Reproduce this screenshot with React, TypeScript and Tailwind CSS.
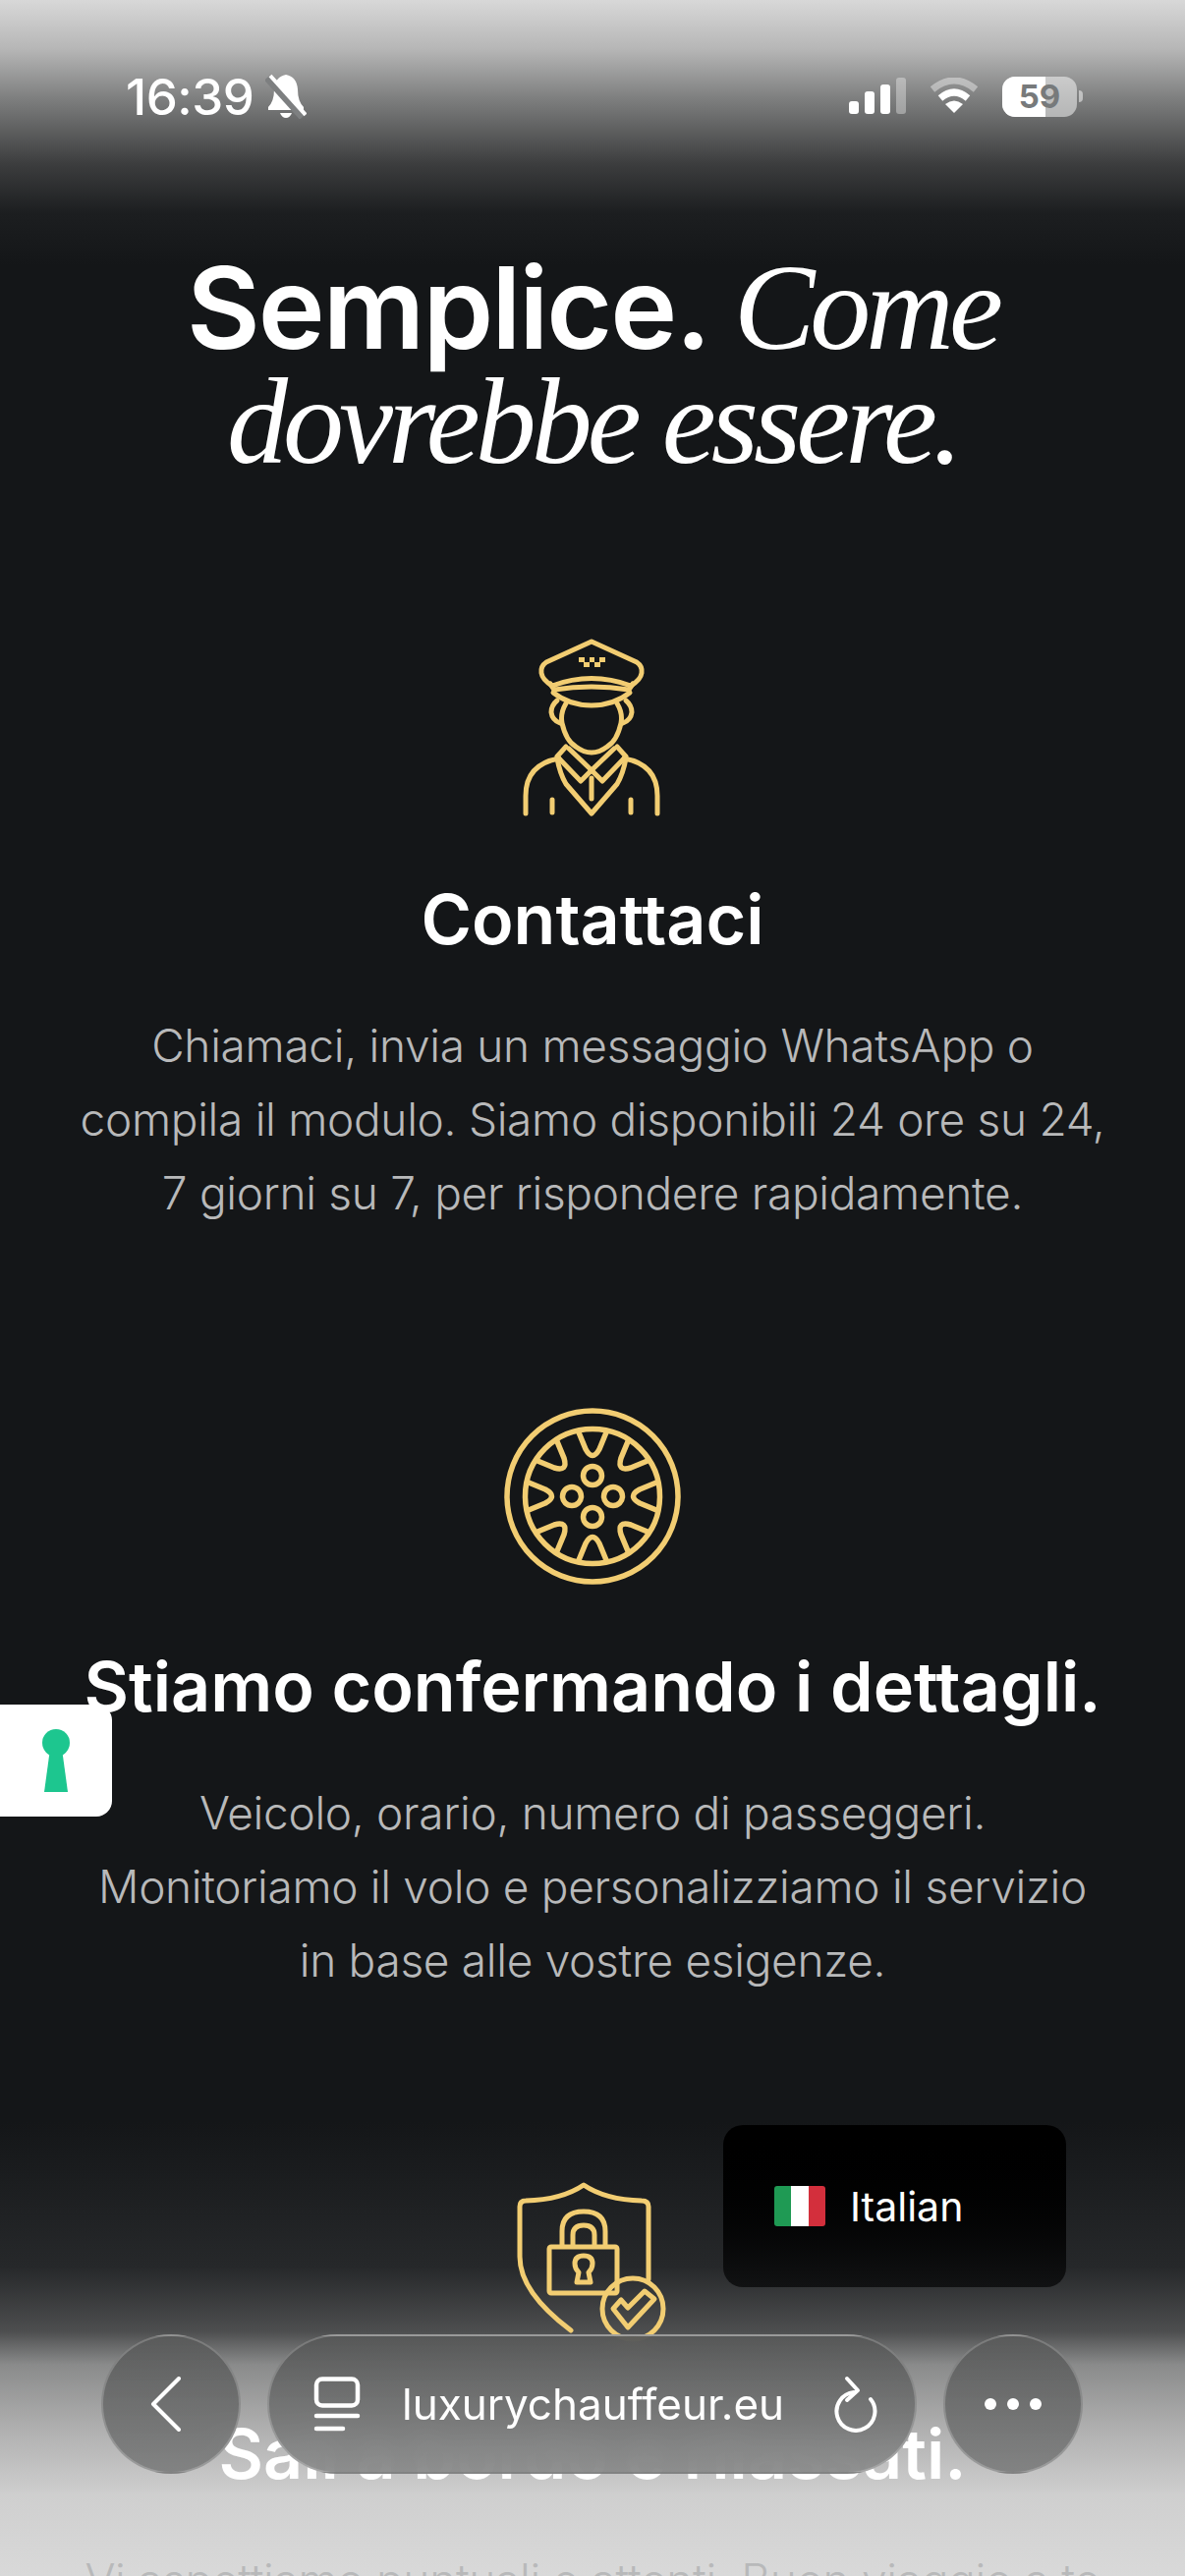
const GOLD = '#f2cd72'

function DriverIcon() {
  return (
    <svg width="142" height="182" viewBox="0 0 142 182" fill="none" stroke={GOLD} strokeWidth="5" strokeLinecap="round" strokeLinejoin="round">
      {/* cap */}
      <path d="M70 3 L116 24 Q122 28 121 35 Q120 42 110 48 Q70 33 30 48 Q20 42 19 35 Q18 28 24 24 Z" />
      <path d="M28 46 L32 52 Q70 46 108 52 L112 46" />
      <path d="M31 55 Q48 68 70 68 Q92 68 109 55" />
      {/* face */}
      <path d="M44 66 Q38 76 40 86 Q44 104 54 110 Q62 116 70 116 Q78 116 86 110 Q96 104 100 86 Q102 76 96 66" />
      <path d="M35 63 Q29 68 29 75 Q30 83 38 86 M105 63 Q111 68 111 75 Q110 83 102 86" />
      {/* collar and vest */}
      <path d="M44 110 L35 120 L59 145 L70 134 L81 145 L105 120 L96 110" />
      <path d="M47 112 L70 134 L93 112" />
      <path d="M35 122 Q38 138 44 148 L70 178 L96 148 Q102 138 105 122" />
      <path d="M70 142 L70 163" />
      <path d="M37 122 Q3 128 3 160 L3 178 M103 122 Q137 128 137 160 L137 178" />
      <path d="M30 164 L30 177 M110 164 L110 177" />
      <g fill={GOLD} stroke="none">
        <rect x="57" y="19" width="6" height="5" /><rect x="62" y="24" width="6" height="5" />
        <rect x="68" y="19" width="5" height="5" /><rect x="73" y="24" width="6" height="5" />
        <rect x="78" y="19" width="6" height="5" />
      </g>
    </svg>
  )
}

function WheelIcon() {
  const spokes = [0, 45, 90, 135, 180, 225, 270, 315]
  return (
    <svg width="180" height="180" viewBox="0 0 180 180" fill="none" stroke={GOLD} strokeWidth="5.5" strokeLinecap="round" strokeLinejoin="round">
      <circle cx="90" cy="90" r="87" />
      <circle cx="90" cy="90" r="68.5" />
      {spokes.map((a) => (
        <path key={a} transform={`rotate(${a} 90 90)`} d="M76 25 L83 42 Q90 55 97 42 L104 25" />
      ))}
      <circle cx="90" cy="69" r="9.5" />
      <circle cx="90" cy="111" r="9.5" />
      <circle cx="69" cy="90" r="9.5" />
      <circle cx="111" cy="90" r="9.5" />
    </svg>
  )
}

function ShieldIcon() {
  return (
    <svg width="154" height="173" viewBox="0 0 154 173" fill="none" stroke={GOLD} strokeWidth="5" strokeLinecap="round" strokeLinejoin="round">
      <path d="M55 151 Q3 112 3 76 L3 25 Q3 19 9 19 Q46 18 68 3 Q90 18 127 19 Q134 19 134 25 L134 99" />
      <rect x="33" y="66" width="69" height="47" rx="2" />
      <path d="M46 65 L46 50 Q46 30 68 30 Q90 30 90 50 L90 65" />
      <path d="M57 65 L57 54 Q57 44 68 44 Q79 44 79 54 L79 65" />
      <path d="M63 92 Q59 88 59 83 Q59 75 68 75 Q77 75 77 83 Q77 88 73 92 L75 102 L61 102 Z" />
      <circle cx="118" cy="129" r="31" />
      <path d="M98 129 L113 148 L140 119 L130 111 L113 128 L106 120 Z" />
    </svg>
  )
}

const steps = [
  {
    icon: <DriverIcon />,
    title: 'Contattaci',
    text: ['Chiamaci, invia un messaggio WhatsApp o', 'compila il modulo. Siamo disponibili 24 ore su 24,', '7 giorni su 7, per rispondere rapidamente.'],
  },
  {
    icon: <WheelIcon />,
    title: 'Stiamo confermando i dettagli.',
    text: ['Veicolo, orario, numero di passeggeri.', 'Monitoriamo il volo e personalizziamo il servizio', 'in base alle vostre esigenze.'],
  },
  {
    icon: <ShieldIcon />,
    title: 'Sali a bordo e rilassati.',
    text: ['Vi aspettiamo puntuali e attenti. Buon viaggio a te'],
  },
]

function StatusBar() {
  return (
    <div className="absolute top-[72px] left-0 w-full h-[52px] pl-[128px] pr-[104px] flex items-center justify-between text-white">
      <div className="flex items-center gap-[12px]">
        <span className="text-[51px] leading-none font-medium tracking-[-0.5px]">16:39</span>
        <svg width="42" height="46" viewBox="0 0 42 46" fill="white">
          <path d="M21 1 Q10 3 9 16 Q9 28 3 34 L3 37 L39 37 L39 34 Q33 28 33 16 Q32 3 21 1 Z" />
          <path d="M15 40 L27 40 Q25 45 21 45 Q17 45 15 40 Z" />
          <path d="M2 4 L38 44" stroke="#7d7f80" strokeWidth="8" />
          <path d="M5 2 L41 42" stroke="white" strokeWidth="4" />
        </svg>
      </div>
      <div className="flex items-center gap-[24px]">
        <svg width="58" height="38" viewBox="0 0 58 38" fill="white">
          <rect x="0" y="24" width="10" height="13" rx="3" />
          <rect x="16" y="14" width="10" height="23" rx="3" />
          <rect x="32" y="7" width="10" height="30" rx="3" />
          <rect x="48" y="0" width="10" height="37" rx="3" opacity="0.35" />
        </svg>
        <svg width="50" height="38" viewBox="0 0 50 38" fill="none" stroke="white" strokeWidth="7">
          <path d="M3 12 Q25 -6 47 12" opacity="0.4" />
          <path d="M11 21 Q25 9 39 21" />
          <path d="M25 36 L16 27 Q25 20 34 27 Z" fill="white" stroke="none" />
        </svg>
        <div className="flex items-center gap-[2px]">
          <div className="relative w-[76px] h-[41px] rounded-[13px] overflow-hidden bg-white/50 flex items-center justify-center">
            <div className="absolute left-0 top-0 h-full w-[44px] bg-white" />
            <span className="relative text-[33px] leading-none font-bold text-[#777a7b]">59</span>
          </div>
          <div className="w-[4px] h-[12px] rounded-r-full bg-white/50" />
        </div>
      </div>
    </div>
  )
}

function BottomBar() {
  return (
    <div className="absolute left-[103px] top-[2376px] flex items-center gap-[27px]">
      <div className="w-[142px] h-[142px] rounded-full bg-gradient-to-b from-[#595a5a]/90 to-[#7b7c7c]/90 border-2 border-white/20 flex items-center justify-center text-white backdrop-blur-md">
        <svg width="32" height="56" viewBox="0 0 32 56" fill="none" stroke="white" strokeWidth="4" strokeLinecap="round" strokeLinejoin="round" className="-ml-[10px]">
          <path d="M29 2 L3 28 L29 54" />
        </svg>
      </div>
      <div className="w-[661px] h-[142px] rounded-full bg-gradient-to-b from-[#565757]/90 to-[#868787]/90 border-2 border-white/20 flex items-center pl-[45px] pr-[38px] text-white backdrop-blur-md">
        <svg width="48" height="56" viewBox="0 0 48 56" fill="none" stroke="white" strokeWidth="4.5" strokeLinecap="round" className="shrink-0">
          <rect x="3" y="2.5" width="42" height="27" rx="6" />
          <path d="M3 40 L45 40" />
          <path d="M3 53 L30 53" />
        </svg>
        <span className="ml-[42px] text-[44px] leading-none flex-1">luxurychauffeur.eu</span>
        <svg width="46" height="58" viewBox="0 0 46 58" fill="none" stroke="white" strokeWidth="4" strokeLinecap="round" strokeLinejoin="round">
          <path d="M39 24 A19.5 19.5 0 1 1 22 17" />
          <path d="M15 3 L26 15 L15 25" />
        </svg>
      </div>
      <div className="w-[142px] h-[142px] rounded-full bg-gradient-to-b from-[#595a5a]/90 to-[#7b7c7c]/90 border-2 border-white/20 flex items-center justify-center gap-[11px] backdrop-blur-md">
        <span className="w-[12px] h-[12px] rounded-full bg-white" />
        <span className="w-[12px] h-[12px] rounded-full bg-white" />
        <span className="w-[12px] h-[12px] rounded-full bg-white" />
      </div>
    </div>
  )
}

export default function App() {
  return (
    <div className="relative w-[1206px] h-[2622px] overflow-hidden bg-[#141618] text-white font-['Inter',sans-serif]">
      {/* browser fades sit behind the page text */}
      <div className="absolute top-0 left-0 w-full h-[270px] bg-[linear-gradient(to_bottom,#d8d8d8_0px,#b6b6b6_50px,#7e7f7f_100px,#3c3d3e_167px,#1c1e20_217px,#141618_270px)]" />
      <div className="absolute top-[2160px] left-0 w-full h-[462px] bg-[linear-gradient(to_bottom,#141618_0px,#26282a_147px,#4d4e4f_213px,#8a8b8b_247px,#b0b0b0_313px,#cfcfcf_380px,#d9d9d9_462px)]" />

      <main className="relative flex flex-col items-center pt-[256px]">
        <h1 className="text-center text-[115px] leading-[116px] tracking-[-2px]">
          <span className="font-semibold">Semplice. </span>
          <span className="font-['Liberation_Serif',serif] italic text-[124px] tracking-[-5px]">Come</span>
          <br />
          <span className="font-['Liberation_Serif',serif] italic text-[124px] tracking-[-5px]">dovrebbe essere.</span>
        </h1>
        <div className="mt-[162px] flex flex-col items-center gap-[179px]">
          {steps.map((step) => (
            <section key={step.title} className="flex flex-col items-center text-center">
              <div className="h-[182px] flex items-end">{step.icon}</div>
              <h2 className="mt-[64px] text-[70px] leading-[80px] font-semibold">{step.title}</h2>
              <p className="mt-[51px] text-[46px] leading-[75px] font-light text-[#b8b9ba] tracking-[-0.3px]">
                {step.text.map((line) => (
                  <span key={line} className="block whitespace-nowrap">{line}</span>
                ))}
              </p>
            </section>
          ))}
        </div>
      </main>

      <StatusBar />

      {/* language switcher */}
      <div className="absolute left-[736px] top-[2163px] w-[349px] h-[165px] rounded-[20px] bg-gradient-to-b from-black to-[#111213] flex items-start pt-[62px] pl-[52px] gap-[25px]">
        <div className="w-[52px] h-[41px] rounded-[3px] overflow-hidden flex shrink-0">
          <div className="flex-1 bg-[#1f9a54]" />
          <div className="flex-1 bg-white" />
          <div className="flex-1 bg-[#d32f3c]" />
        </div>
        <span className="text-[41px] leading-[42px] font-normal">Italian</span>
      </div>

      {/* keyhole widget */}
      <div className="absolute left-0 top-[1735px] w-[114px] h-[114px] bg-white rounded-r-[16px] flex items-center justify-center">
        <svg width="28" height="64" viewBox="0 0 28 64" fill="#1dc68f">
          <circle cx="14" cy="14" r="14" />
          <path d="M8 20 L20 20 L26 64 L2 64 Z" />
        </svg>
      </div>

      <BottomBar />
    </div>
  )
}
